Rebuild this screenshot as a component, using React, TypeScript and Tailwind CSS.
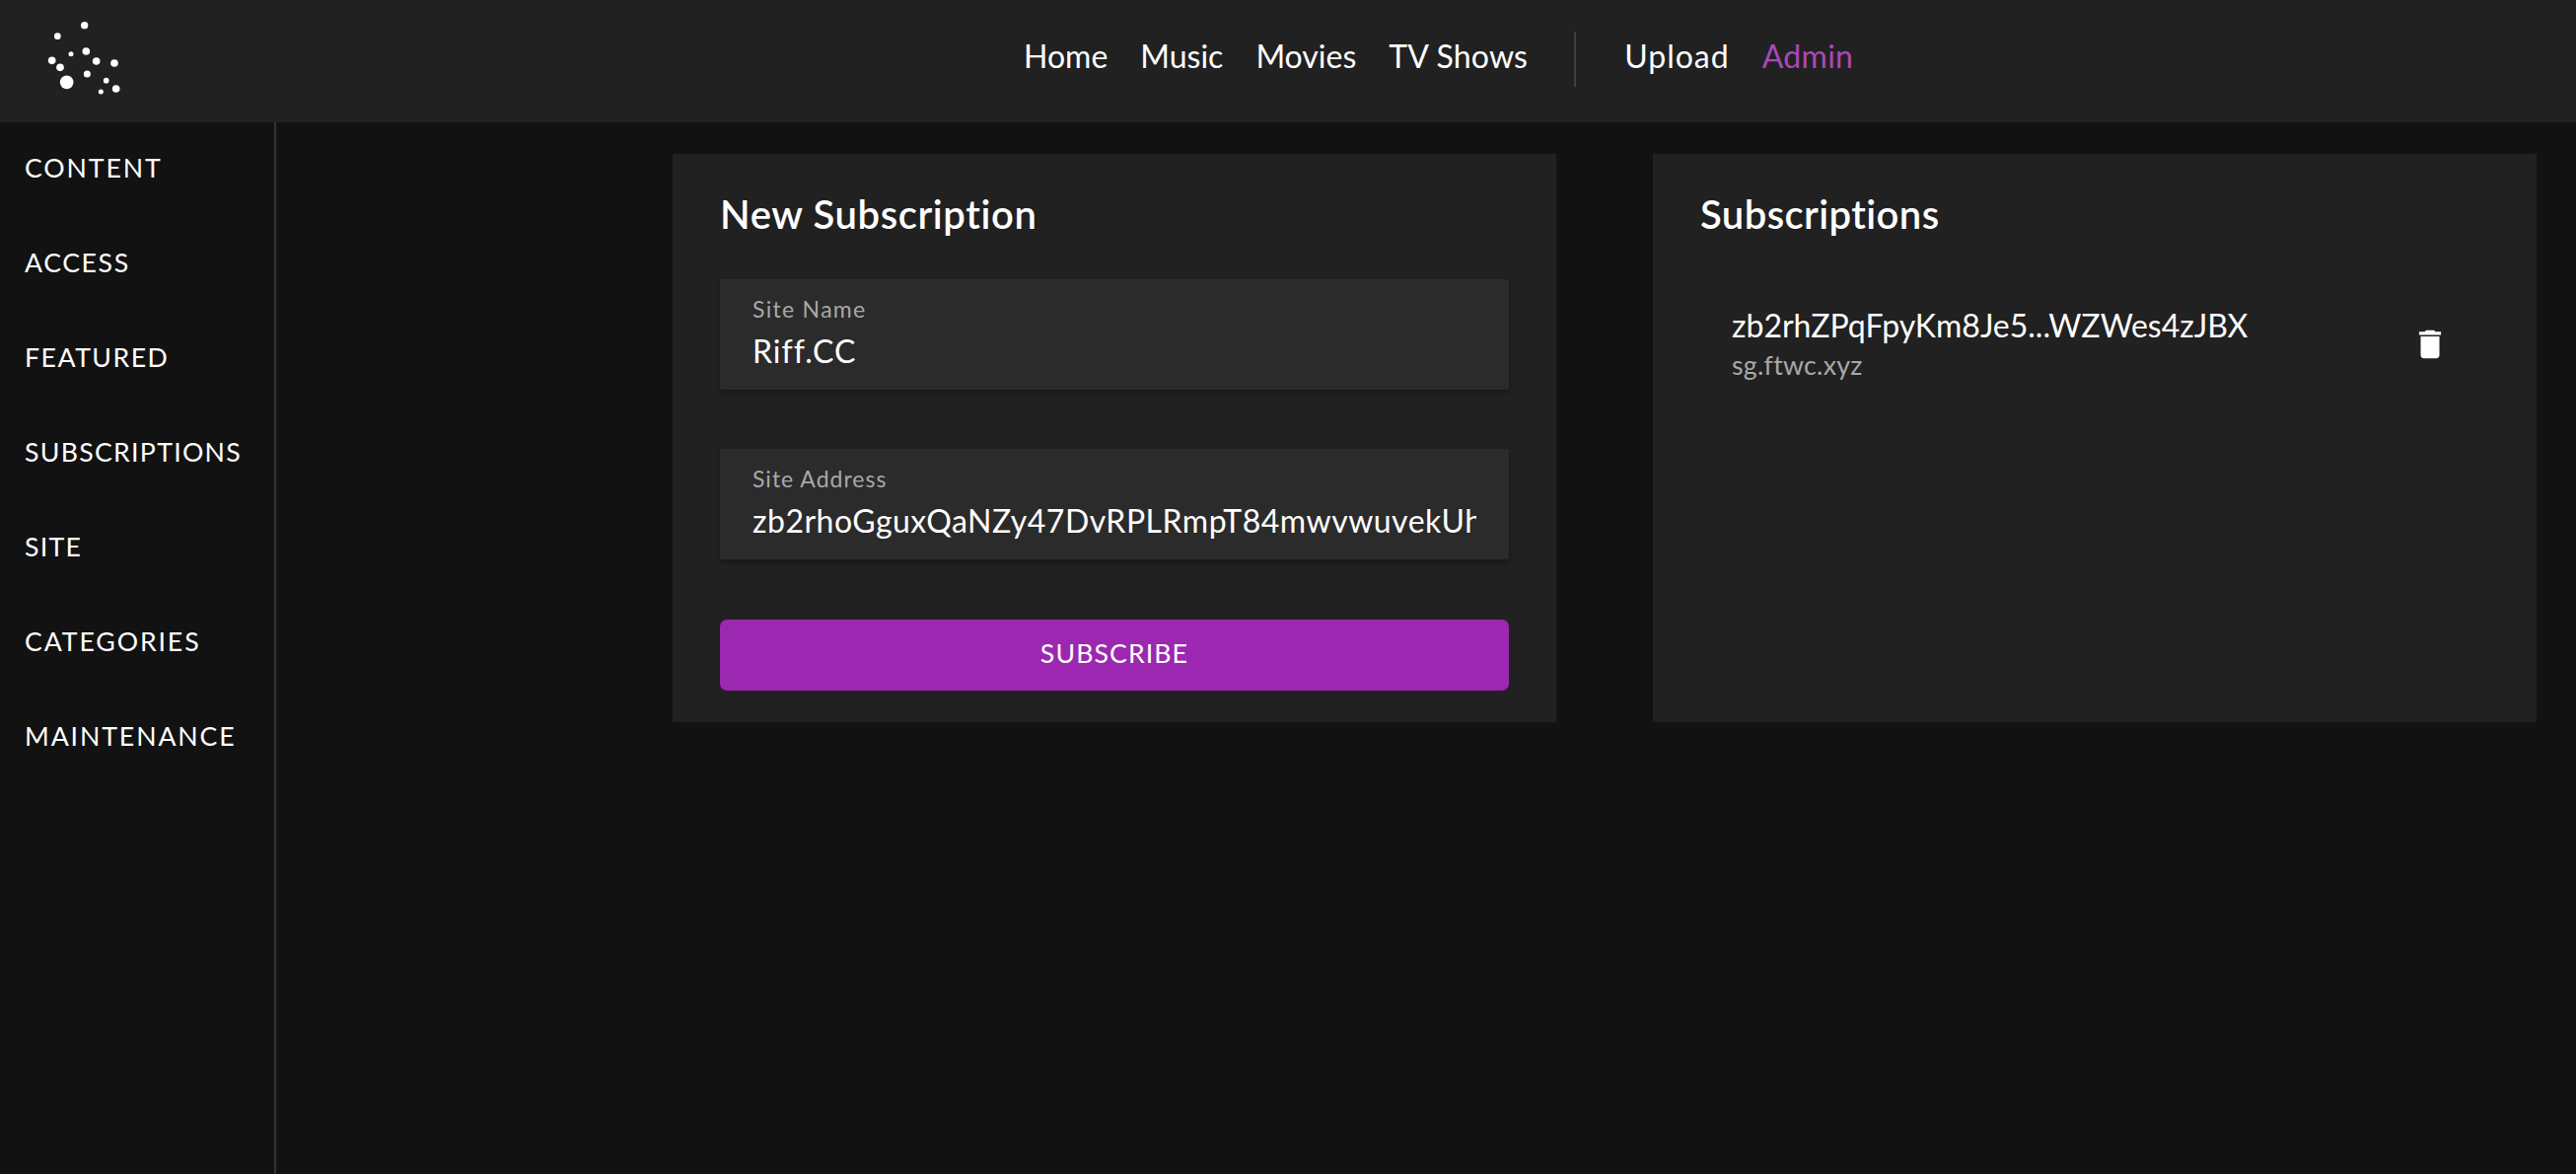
const dots: [number, number, number][] = [
  [257, 77, 11], [175, 110, 10], [216, 164, 7.5], [262, 156, 11.5], [293, 186, 11.5],
  [348, 192, 11.5], [158, 184, 11.5], [183, 205, 11.5], [265, 225, 10.5], [203, 250, 20.5],
  [323, 245, 8.5], [353, 270, 11.5], [307, 279, 7.5],
];

const sideItems: [string, string][] = [
  ["CONTENT", "tracking-[1.9px]"],
  ["ACCESS", "tracking-[1.6px]"],
  ["FEATURED", "tracking-[1.5px]"],
  ["SUBSCRIPTIONS", "tracking-[1.3px]"],
  ["SITE", "tracking-[1.3px]"],
  ["CATEGORIES", "tracking-[1.9px]"],
  ["MAINTENANCE", "tracking-[1.9px]"],
];

function NavLink({ label, tone = "text-white" }: { label: string; tone?: string }) {
  return <a className={`${tone} text-[32px] leading-[40px] pb-[6px] whitespace-nowrap`}>{label}</a>;
}

function Field({ label, labelTrack, value, valueTrack }: { label: string; labelTrack: string; value: string; valueTrack: string }) {
  return (
    <div className="h-[112px] bg-[#2b2b2b] rounded-[2px] shadow-[0_3px_5px_rgba(0,0,0,0.3)] px-[33px] pt-[14px] flex flex-col">
      <div className={`text-[23px] leading-[32px] text-[#a8a8a8] ${labelTrack}`}>{label}</div>
      <div className={`mt-[7px] text-[32px] leading-[40px] text-white overflow-hidden whitespace-nowrap ${valueTrack}`}>{value}</div>
    </div>
  );
}

export default function App() {
  return (
    <div className="w-full h-screen bg-[#121212] flex flex-col overflow-hidden font-['Lato',sans-serif]">
      <header className="h-[124px] shrink-0 bg-[#212121] flex items-center">
        <svg className="w-[300px] h-[124px] shrink-0" viewBox="0 0 900 372" fill="#fff">
          {dots.map(([x, y, r]) => (
            <circle key={`${x}-${y}`} cx={x} cy={y} r={r} />
          ))}
        </svg>
        <nav className="ml-[738px] pb-[4px] flex items-center gap-[33px]">
          <NavLink label="Home" />
          <NavLink label="Music" />
          <NavLink label="Movies" />
          <NavLink label="TV Shows" tone="text-white tracking-[0.2px]" />
          <div className="w-[2px] h-[56px] bg-[#3f3f3f] ml-[14px] mr-[16px]" />
          <NavLink label="Upload" tone="text-white tracking-[1px]" />
          <NavLink label="Admin" tone="text-[#ab47bc] tracking-[0.3px]" />
        </nav>
      </header>
      <div className="flex-1 flex min-h-0">
        <aside className="w-[280px] shrink-0 border-r-2 border-[#333333] pl-[25px] pt-[26px] flex flex-col gap-[56px]">
          {sideItems.map(([s, t]) => (
            <a key={s} className={`text-white text-[26.67px] leading-[40px] h-[40px] whitespace-nowrap ${t}`}>{s}</a>
          ))}
        </aside>
        <main className="flex-1 pl-[402px] pr-[40px] pt-[32px] flex gap-[98px] items-start">
          <section className="w-[896px] h-[576px] bg-[#212121] px-[48px] pt-[33px]">
            <h2 className="text-[40px] leading-[56px] font-semibold text-white tracking-[0.6px]">New Subscription</h2>
            <div className="mt-[38px] flex flex-col gap-[60px]">
              <Field label="Site Name" labelTrack="tracking-[1.3px]" value="Riff.CC" valueTrack="tracking-[1px]" />
              <Field label="Site Address" labelTrack="tracking-[1px]" value="zb2rhoGguxQaNZy47DvRPLRmpT84mwvwuvekUhXyz" valueTrack="tracking-[0.5px]" />
            </div>
            <button className="mt-[61px] w-full h-[72px] pb-[5px] rounded-[7px] bg-[#9c27b0] text-white text-[26.67px] tracking-[1.1px]">SUBSCRIBE</button>
          </section>
          <section className="w-[896px] h-[576px] bg-[#212121] px-[48px] pt-[33px]">
            <h2 className="text-[40px] leading-[56px] font-semibold text-white tracking-[0.4px]">Subscriptions</h2>
            <div className="mt-[65px] flex items-center pl-[32px] pr-[41px]">
              <div className="flex-1">
                <div className="text-[32px] leading-[40px] text-white">zb2rhZPqFpyKm8Je5...WZWes4zJBX</div>
                <div className="mt-[2px] text-[26.67px] leading-[36px] text-[#a8a8a8] tracking-[0.3px]">sg.ftwc.xyz</div>
              </div>
              <svg className="w-[38px] h-[38px] shrink-0" viewBox="0 0 24 24" fill="#fff">
                <path d="M6 19c0 1.1.9 2 2 2h8c1.1 0 2-.9 2-2V7H6v12zM19 4h-3.5l-1-1h-5l-1 1H5v2h14V4z" />
              </svg>
            </div>
          </section>
        </main>
      </div>
    </div>
  );
}
